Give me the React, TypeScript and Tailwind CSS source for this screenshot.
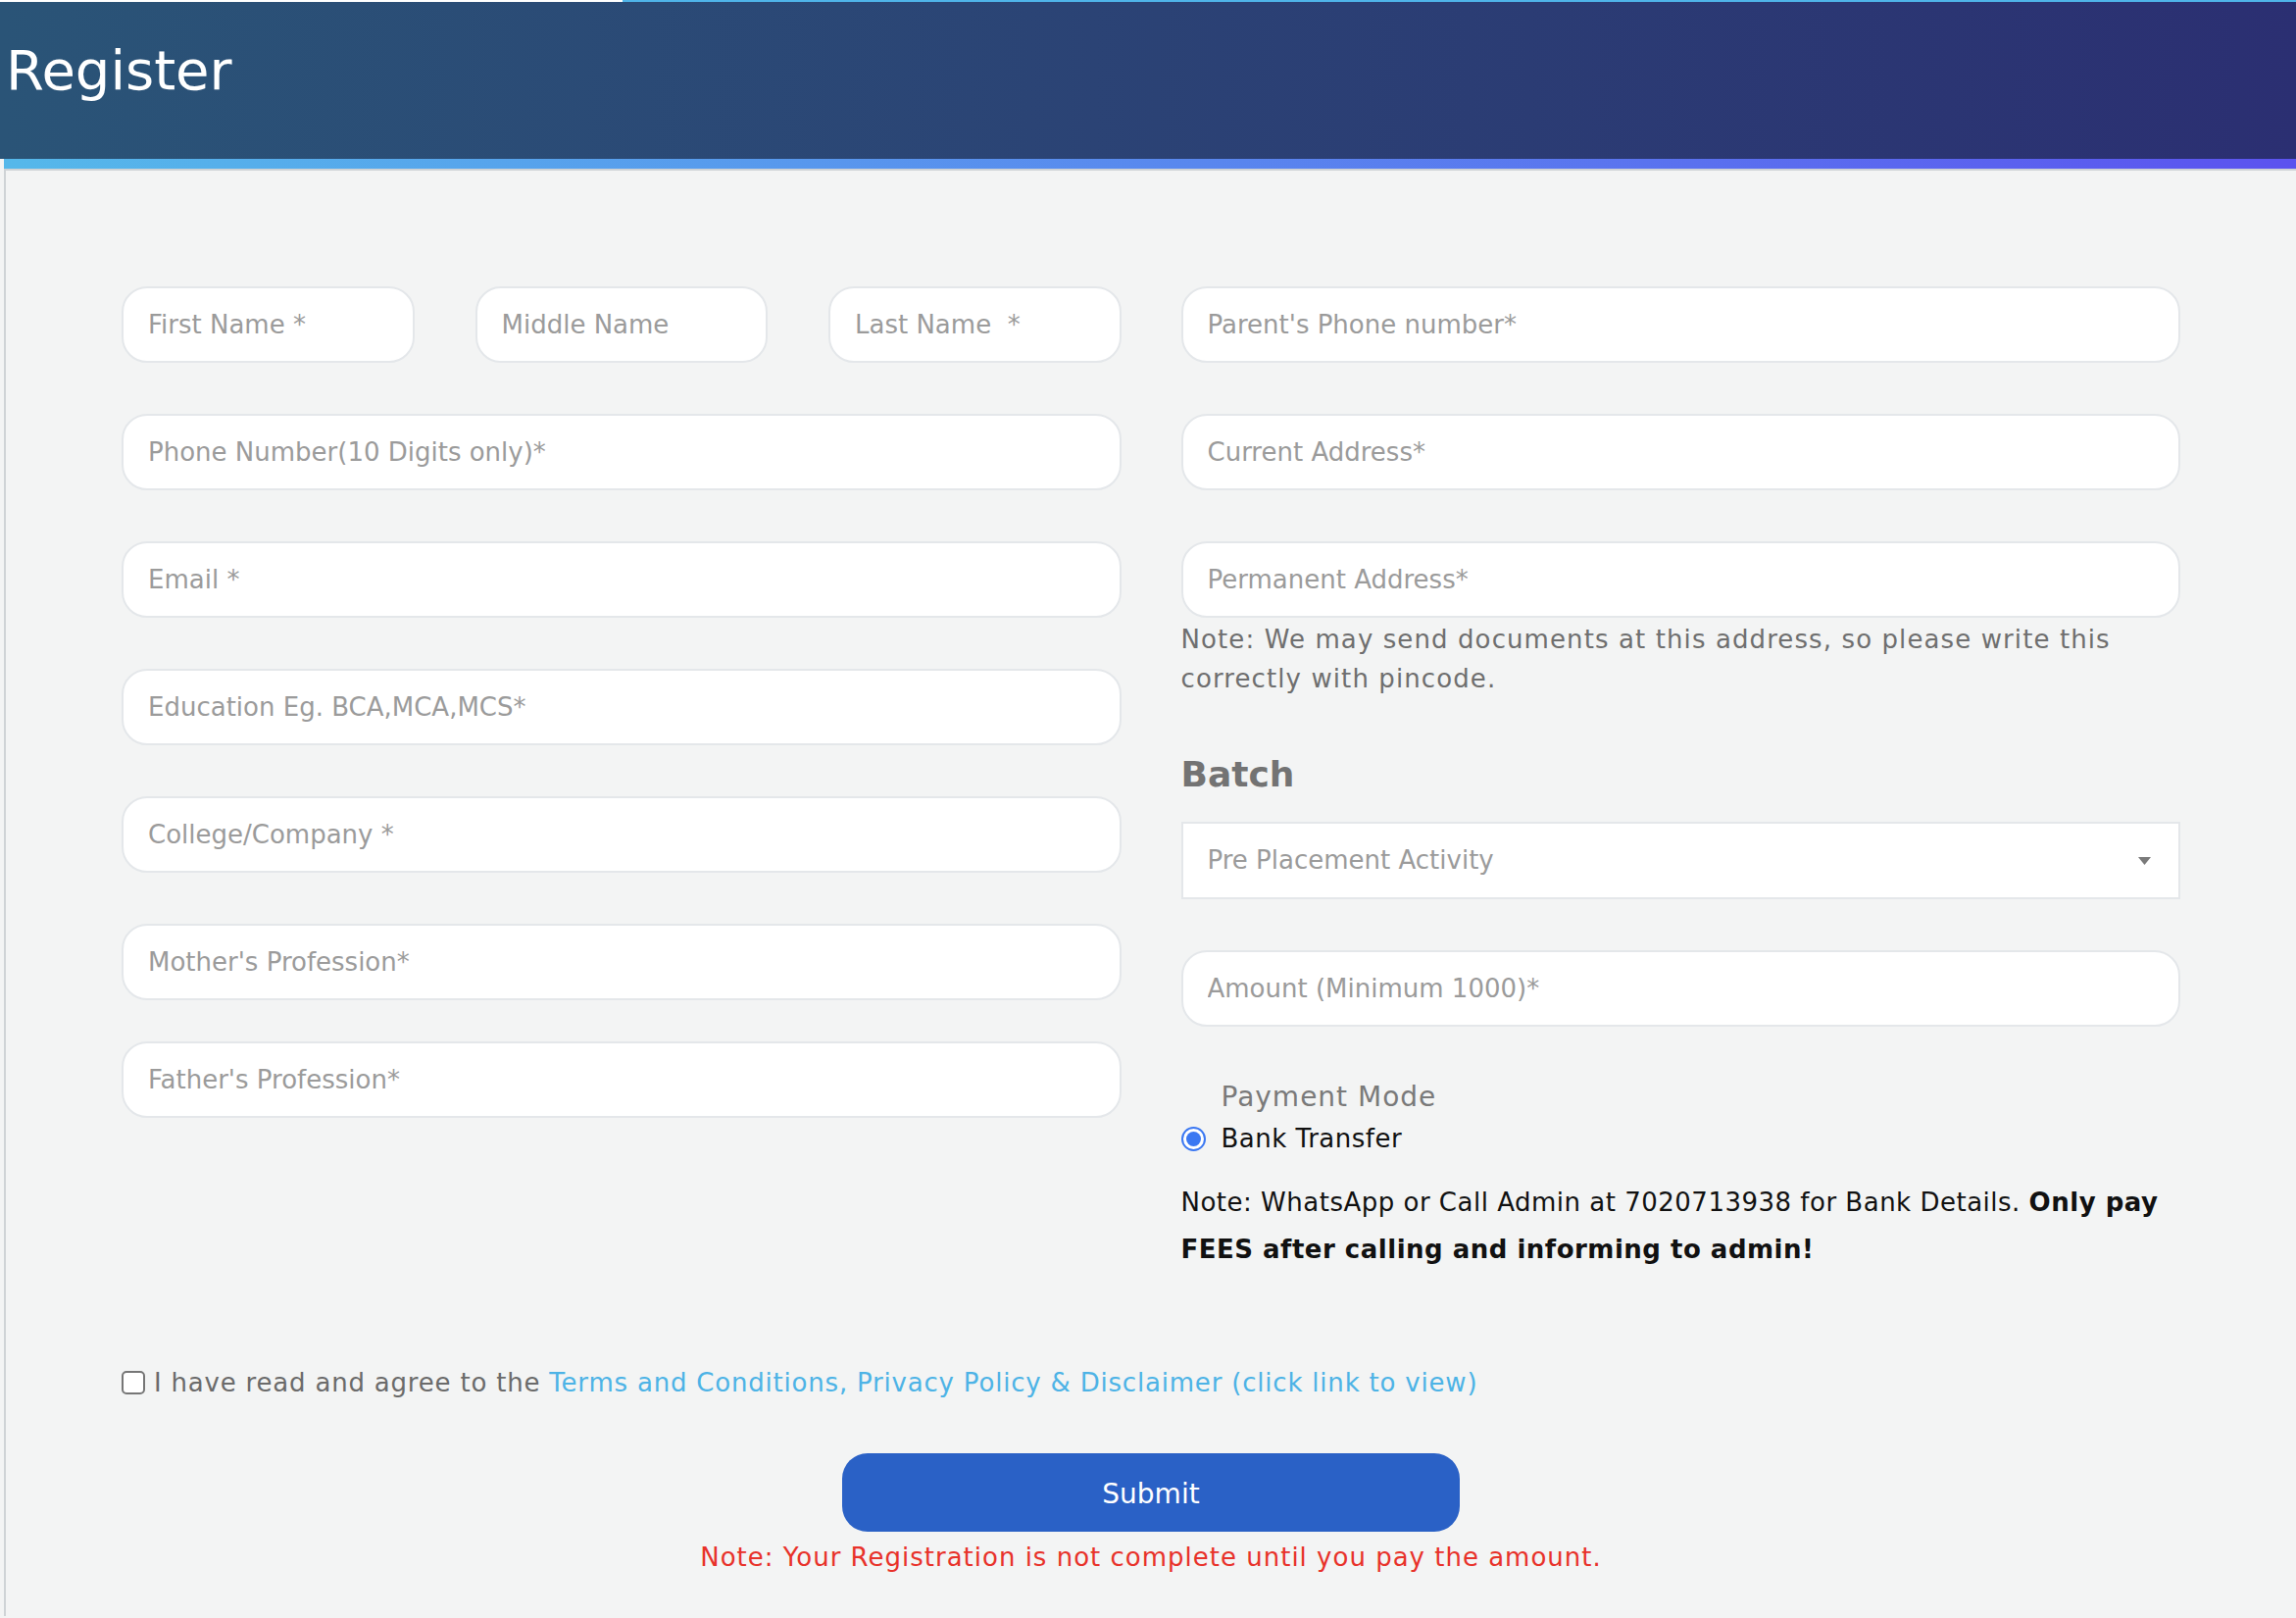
import React from 'react';

const font = "font-['DejaVu_Sans',sans-serif]";

const inputCls =
  'w-full h-[78px] rounded-[26px] border-2 border-[#e4e7ea] bg-white px-[25px] text-[26px] text-[#333] placeholder:text-[#9b9b9b] outline-none';

const Field = ({ placeholder, className = '' }: { placeholder: string; className?: string }) => (
  <input type="text" placeholder={placeholder} className={`${inputCls} ${className}`} />
);

export default function App() {
  return (
    <div className={`min-h-screen bg-[#f3f4f4] ${font}`}>
      {/* top progress line */}
      <div className="flex h-[2px]">
        <div className="w-[635px] bg-white" />
        <div className="flex-1 bg-[#4fb4e9]" />
      </div>

      <header className="h-[160px] bg-linear-to-r from-[#2a5477] to-[#2b2f72] pl-[6px] pt-[42px]">
        <h1 className="text-[56px] leading-none text-white">Register</h1>
      </header>

      <div className="ml-[4px]">
        <div className="h-[10px] bg-linear-to-r from-[#55b8ea] to-[#5b52ef]" />
        <div className="border-t-2 border-l-2 border-[#cfd3d6] px-[118px] pt-[118px] pb-[40px]">
          <div className="grid grid-cols-2 gap-x-[61px]">
            {/* left column */}
            <div className="flex flex-col">
              <div className="grid grid-cols-3 gap-x-[62px]">
                <Field placeholder="First Name *" />
                <Field placeholder="Middle Name" />
                <Field placeholder="Last Name  *" />
              </div>
              <Field placeholder="Phone Number(10 Digits only)*" className="mt-[52px]" />
              <Field placeholder="Email *" className="mt-[52px]" />
              <Field placeholder="Education Eg. BCA,MCA,MCS*" className="mt-[52px]" />
              <Field placeholder="College/Company *" className="mt-[52px]" />
              <Field placeholder="Mother's Profession*" className="mt-[52px]" />
              <Field placeholder="Father's Profession*" className="mt-[42px]" />
            </div>

            {/* right column */}
            <div className="flex flex-col">
              <Field placeholder="Parent's Phone number*" />
              <Field placeholder="Current Address*" className="mt-[52px]" />
              <Field placeholder="Permanent Address*" className="mt-[52px]" />
              <p className="pt-[2px] text-[26px] leading-[40px] tracking-[1.1px] text-[#6f6f6f]">
                Note: We may send documents at this address, so please write this correctly with pincode.
              </p>

              <h2 className="mt-[56px] text-[36px] font-bold leading-[44px] text-[#737373]">Batch</h2>
              <div className="mt-[26px] flex h-[79px] items-center justify-between border-2 border-[#e4e7ea] bg-white pl-[25px] pr-[28px]">
                <span className="text-[26px] text-[#9b9b9b]">Pre Placement Activity</span>
                <svg width="13" height="8" viewBox="0 0 13 8">
                  <path d="M0 0h13L6.5 8z" fill="#7a7a7a" />
                </svg>
              </div>

              <Field placeholder="Amount (Minimum 1000)*" className="mt-[52px]" />

              <div className="mt-[52px] pl-[41px] text-[28px] leading-[40px] tracking-[1px] text-[#7a7a7a]">
                Payment Mode
              </div>
              <label className="mt-[2px] flex items-center gap-[16px] text-[26px] leading-[40px] tracking-[0.5px] text-[#111]">
                <span className="flex h-[25px] w-[25px] items-center justify-center rounded-full border-2 border-[#3b78f2] bg-white">
                  <span className="h-[15px] w-[15px] rounded-full bg-[#3b78f2]" />
                </span>
                Bank Transfer
              </label>

              <p className="mt-[21px] text-[26px] leading-[48px] tracking-[0.5px] text-[#111]">
                Note: WhatsApp or Call Admin at 7020713938 for Bank Details.{' '}
                <b className="font-bold">Only pay FEES after calling and informing to admin!</b>
              </p>
            </div>
          </div>

          {/* terms */}
          <label className="mt-[92px] flex items-center gap-[9px] text-[26px] leading-[40px] tracking-[0.8px] text-[#6b6b6b]">
            <span className="h-[24px] w-[24px] shrink-0 rounded-[5px] border-2 border-[#767676] bg-white" />
            <span>
              I have read and agree to the{' '}
              <a href="#" className="text-[#4db3e6]">
                Terms and Conditions, Privacy Policy &amp; Disclaimer (click link to view)
              </a>
            </span>
          </label>

          <div className="flex flex-col items-center">
            <button
              type="button"
              className="mt-[52px] h-[80px] w-[630px] rounded-[26px] bg-[#2a61c6] pt-[4px] text-[28px] text-white"
            >
              Submit
            </button>
            <p className="mt-[6px] text-[26px] leading-[40px] tracking-[1px] text-[#e8322a]">
              Note: Your Registration is not complete until you pay the amount.
            </p>
          </div>
        </div>
      </div>
    </div>
  );
}
